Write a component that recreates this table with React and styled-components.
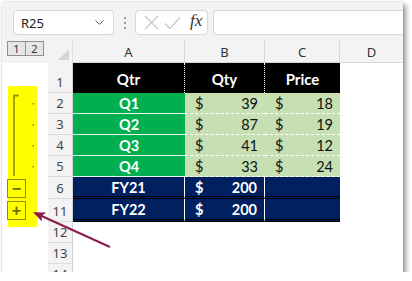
import React from "react";
import styled, { createGlobalStyle } from "styled-components";
import { ChevronDown } from "lucide-react";

const Global = createGlobalStyle`
  html, body {
    margin: 0;
    padding: 0;
    background: #ffffff;
  }
  * {
    box-sizing: border-box;
  }
`;

const Window = styled.div`
  margin: 2px 0 0 2px;
  width: 401px;
  height: 270px;
  background: #ffffff;
  overflow: hidden;
  display: flex;
  flex-direction: column;
  box-shadow: 0 0 2px rgba(0, 0, 0, 0.18), 3px 3px 5px rgba(0, 0, 0, 0.4);
  font-family: "Noto Sans", "Open Sans", sans-serif;
`;

const FormulaBar = styled.div`
  height: 38px;
  flex-shrink: 0;
  background: #f3f3f3;
  display: flex;
  align-items: flex-start;
  padding: 8px 0 0 11px;
`;

const Box = styled.div`
  height: 25px;
  background: #ffffff;
  border: 1px solid #d6d6d6;
  border-radius: 4px;
  display: flex;
  align-items: center;
`;

const NameBox = styled(Box)`
  width: 101px;
  padding: 0 6px 0 7px;
  justify-content: space-between;
  font-size: 13px;
  color: #222;
`;

const Sep = styled.div`
  width: 21px;
  height: 25px;
  display: flex;
  flex-direction: column;
  align-items: center;
  justify-content: center;
  gap: 3px;
  > i {
    width: 2px;
    height: 2px;
    background: #9a9a9a;
    display: block;
  }
`;

const FxBox = styled(Box)`
  width: 73px;
  padding-left: 8px;
  gap: 5px;
`;

const Fx = styled.span`
  font-family: "Liberation Serif", serif;
  font-style: italic;
  font-size: 17px;
  color: #333;
  margin-left: 4px;
  margin-top: -3px;
`;

const Input = styled(Box)`
  margin-left: 5px;
  flex: 1;
  border-right: none;
  border-radius: 4px 0 0 4px;
`;

const HeadRow = styled.div`
  height: 23px;
  flex-shrink: 0;
  display: grid;
  grid-template-columns: 46px 25px 112px 80px 75px 1fr;
  background: #f3f3f3;
`;

const Levels = styled.div`
  display: flex;
  padding: 1px 0 0 5px;
`;

const Level = styled.div`
  width: 19px;
  height: 15px;
  border: 1px solid #8f8f8f;
  margin-left: ${(p) => (p.$first ? "0" : "-1px")};
  background: #e6e6e6;
  font-size: 11px;
  color: #333;
  display: flex;
  align-items: center;
  justify-content: center;
`;

const Corner = styled.div`
  display: flex;
  align-items: flex-end;
  justify-content: flex-end;
  padding: 0 3px 3px 0;
  border-right: 1px solid #dedede;
  > span {
    width: 0;
    height: 0;
    border-left: 11px solid transparent;
    border-bottom: 11px solid #d6d6d6;
  }
`;

const ColHead = styled.div`
  display: flex;
  align-items: center;
  justify-content: center;
  font-size: 13px;
  color: #333;
  padding-top: 1px;
  border-right: ${(p) => (p.$last ? "none" : "1px solid #dadada")};
  border-bottom: 1px solid #d8d8d8;
`;

const Body = styled.div`
  position: relative;
  flex: 1;
  display: flex;
  min-height: 0;
`;

const Gutter = styled.div`
  width: 46px;
  flex-shrink: 0;
  padding: 23px 0 0 6px;
`;

const Highlight = styled.div`
  width: 29px;
  height: 141px;
  background: #ffff00;
  display: flex;
  flex-direction: column;
  align-items: flex-start;
  gap: 3px;
`;

const OutlineBtn = styled.div`
  width: 19px;
  height: 19px;
  margin-left: -1px;
  border: 1px solid #8f8f00;
  background: #ffff00;
  display: flex;
  align-items: center;
  justify-content: center;
  color: #6e6e00;
  font-family: "Liberation Sans", sans-serif;
  font-weight: bold;
  font-size: 16px;
  line-height: 1;
`;

const Grid = styled.div`
  flex: 1;
  display: grid;
  grid-template-columns: 25px 112px 80px 75px 1fr;
  grid-template-rows: 30px 21px 21px 21px 21px 22px 23px 21px 21px 21px;
  font-family: "Lato", "Liberation Sans", sans-serif;
  font-size: 14px;
`;

const RowNum = styled.div`
  background: #f3f3f3;
  border-bottom: 1px solid #dcdcdc;
  border-right: 1px solid #d4d4d4;
  display: flex;
  align-items: flex-end;
  justify-content: center;
  padding-bottom: 1px;
  font-family: "Noto Sans", sans-serif;
  font-size: 13px;
  color: #444;
`;

const fills = {
  head: "#000000",
  q: "#00b050",
  val: "#c6e0b4",
  total: "#002060",
  blank: "#ffffff",
};

const Cell = styled.div`
  background: ${(p) => fills[p.$kind]};
  color: ${(p) => (p.$kind === "val" ? "#111" : "#ffffff")};
  font-weight: ${(p) => (p.$kind === "val" ? "normal" : "bold")};
  display: flex;
  align-items: center;
  justify-content: ${(p) => (p.$money ? "space-between" : "center")};
  padding: ${(p) => (p.$money ? "1px 7px 0 10px" : "1px 0 0")};
  border-right: ${(p) =>
    p.$kind === "head" && p.$sep
      ? "1px dotted #ffffff"
      : p.$kind === "total" && p.$sep
      ? "1px solid #ffffff"
      : "none"};
  border-bottom: ${(p) =>
    p.$kind === "q"
      ? "1px solid #e8f5ec"
      : p.$kind === "val"
      ? "1px dashed #ffffff"
      : p.$kind === "total"
      ? "3px double #000000"
      : "none"};
  font-size: ${(p) => (p.$kind === "head" ? "15px" : "14.5px")};
`;

const ArrowLayer = styled.svg`
  position: absolute;
  left: 0;
  top: 0;
  pointer-events: none;
`;

const data = [
  ["Q1", 39, 18],
  ["Q2", 87, 19],
  ["Q3", 41, 12],
  ["Q4", 33, 24],
];

const Money = ({ kind, value, sep }) => (
  <Cell $kind={kind} $money $sep={sep}>
    <span>$</span>
    <span>{value}</span>
  </Cell>
);

export default function App() {
  return (
    <>
      <Global />
      <Window>
        <FormulaBar>
          <NameBox>
            <span>R25</span>
            <ChevronDown size={15} color="#555" strokeWidth={1.6} />
          </NameBox>
          <Sep>
            <i />
            <i />
            <i />
          </Sep>
          <FxBox>
            <svg width="15" height="15" viewBox="0 0 15 15">
              <path d="M1 1 L14 14 M14 1 L1 14" stroke="#c4c4c4" strokeWidth="1.2" fill="none" />
            </svg>
            <svg width="17" height="14" viewBox="0 0 17 14">
              <path d="M1 7.5 L6 12.5 L16 1.5" stroke="#c4c4c4" strokeWidth="1.2" fill="none" />
            </svg>
            <Fx>fx</Fx>
          </FxBox>
          <Input />
        </FormulaBar>

        <HeadRow>
          <Levels>
            <Level $first>1</Level>
            <Level>2</Level>
          </Levels>
          <Corner>
            <span />
          </Corner>
          <ColHead>A</ColHead>
          <ColHead>B</ColHead>
          <ColHead>C</ColHead>
          <ColHead $last>D</ColHead>
        </HeadRow>

        <Body>
          <Gutter>
            <Highlight>
              <svg width="29" height="90" viewBox="0 0 29 90">
                <path d="M5 9.5 H11 M6 9 V90" stroke="#9a9a00" strokeWidth="1.8" fill="none" />
                {[17, 38, 59, 80].map((y) => (
                  <rect key={y} x="24.5" y={y} width="1.5" height="1.5" fill="#8a8a00" />
                ))}
              </svg>
              <OutlineBtn>−</OutlineBtn>
              <OutlineBtn>+</OutlineBtn>
            </Highlight>
          </Gutter>

          <Grid>
            <RowNum>1</RowNum>
            <Cell $kind="head" $sep>Qtr</Cell>
            <Cell $kind="head" $sep>Qty</Cell>
            <Cell $kind="head">Price</Cell>
            <Cell $kind="blank" />

            {data.map(([q, qty, price], i) => (
              <React.Fragment key={q}>
                <RowNum>{i + 2}</RowNum>
                <Cell $kind="q">{q}</Cell>
                <Money kind="val" value={qty} />
                <Money kind="val" value={price} />
                <Cell $kind="blank" />
              </React.Fragment>
            ))}

            {[
              [6, "FY21"],
              [11, "FY22"],
            ].map(([n, label]) => (
              <React.Fragment key={n}>
                <RowNum>{n}</RowNum>
                <Cell $kind="total" $sep>{label}</Cell>
                <Money kind="total" value={200} sep />
                <Cell $kind="total" />
                <Cell $kind="blank" />
              </React.Fragment>
            ))}

            {[12, 13, 14].map((n) => (
              <React.Fragment key={n}>
                <RowNum>{n}</RowNum>
                <Cell $kind="blank" />
                <Cell $kind="blank" />
                <Cell $kind="blank" />
                <Cell $kind="blank" />
              </React.Fragment>
            ))}
          </Grid>

          <ArrowLayer width="130" height="200" viewBox="0 0 130 200">
            <defs>
              <marker id="head" markerWidth="12" markerHeight="10" refX="10" refY="5" orient="auto" markerUnits="userSpaceOnUse">
                <path d="M0 0 L12 5 L0 10 L3 5 Z" fill="#8c1c4c" />
              </marker>
            </defs>
            <line x1="108" y1="184" x2="33" y2="150" stroke="#8c1c4c" strokeWidth="2" markerEnd="url(#head)" />
          </ArrowLayer>
        </Body>
      </Window>
    </>
  );
}
